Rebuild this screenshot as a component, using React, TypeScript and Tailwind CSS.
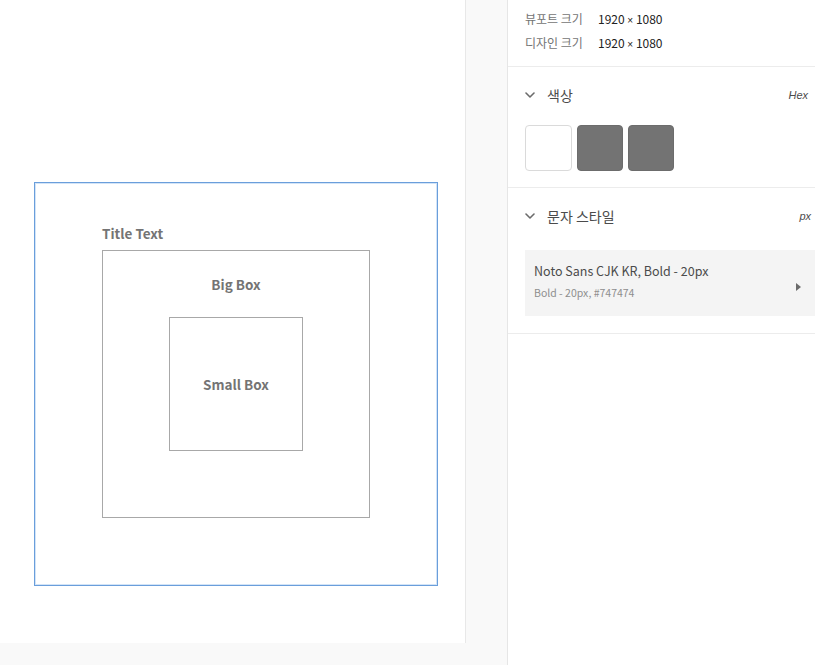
import React from "react";

const Chevron = () => (
  <svg width="10" height="6" viewBox="0 0 10 6" className="shrink-0">
    <path d="M1 1 L5 5 L9 1" fill="none" stroke="#6b6b6b" strokeWidth="1.6" strokeLinecap="round" strokeLinejoin="round" />
  </svg>
);

const Size = () => (
  <span className="text-[#222222]">
    1920 <span className="text-[10px] font-['Liberation_Sans',sans-serif]">×</span> 1080
  </span>
);

export default function App() {
  return (
    <div className="w-[815px] h-[665px] flex bg-[#f9f9f9] overflow-hidden font-['Noto_Sans_CJK_KR','Noto_Sans',sans-serif]">
      {/* Canvas */}
      <div className="w-[466px] h-[643px] shrink-0 bg-white border-r border-[#e8e8e8] pl-[34px] pt-[182px]">
        <div className="w-[404px] h-[404px] border border-[#6a9edb] shadow-[inset_0_0_0_1px_#d3e4f7] flex flex-col pl-[67px] pt-[40px]">
          <div className="h-[20px] leading-[20px] text-[13.5px] font-bold text-[#747474]">Title Text</div>
          <div className="mt-[7px] w-[268px] h-[268px] border border-[#a8a8a8] flex flex-col items-center pt-[23px]">
            <div className="h-[20px] leading-[20px] text-[13.5px] font-bold text-[#747474]">Big Box</div>
            <div className="mt-[23px] w-[134px] h-[134px] border border-[#a8a8a8] flex items-center justify-center">
              <div className="h-[20px] leading-[20px] text-[13.5px] font-bold text-[#747474]">Small Box</div>
            </div>
          </div>
        </div>
      </div>
      <div className="w-[41px] shrink-0" />
      {/* Right panel */}
      <div className="flex-1 h-full bg-white border-l border-[#e6e6e6] flex flex-col">
        <div className="pl-[17px] pt-[7px] pb-[11px] border-b border-[#ececec]">
          <div className="flex h-[24px] items-center text-[12px]">
            <span className="w-[73px] text-[#747474]">뷰포트 크기</span>
            <Size />
          </div>
          <div className="flex h-[24px] items-center text-[12px]">
            <span className="w-[73px] text-[#747474]">디자인 크기</span>
            <Size />
          </div>
        </div>
        <div className="pl-[17px] pt-[16px] pb-[16px] border-b border-[#ececec]">
          <div className="flex h-[24px] items-center pr-[7px]">
            <Chevron />
            <span className="ml-[12px] text-[14px] text-[#4b4b4b]">색상</span>
            <span className="ml-auto text-[11px] italic text-[#4b4b4b] font-['Liberation_Sans',sans-serif]">Hex</span>
          </div>
          <div className="mt-[18px] flex gap-[5px]">
            <div className="w-[47px] h-[46px] rounded-[4px] bg-white border border-[#dadada]" />
            <div className="w-[46px] h-[46px] rounded-[4px] bg-[#737373] border border-[#6c6c6c]" />
            <div className="w-[46px] h-[46px] rounded-[4px] bg-[#737373] border border-[#6c6c6c]" />
          </div>
        </div>
        <div className="pl-[17px] pt-[16px] pb-[17px] border-b border-[#ececec]">
          <div className="flex h-[24px] items-center pr-[4px]">
            <Chevron />
            <span className="ml-[12px] text-[14px] text-[#4b4b4b]">문자 스타일</span>
            <span className="ml-auto text-[11px] italic text-[#4b4b4b] font-['Liberation_Sans',sans-serif]">px</span>
          </div>
          <div className="mt-[22px] h-[66px] bg-[#f4f4f4] flex items-start pl-[9px] pr-[14px]">
            <div className="flex flex-col pt-[12px]">
              <span className="h-[18px] leading-[18px] text-[12.5px] text-[#4b4b4b]">Noto Sans CJK KR, Bold - 20px</span>
              <span className="mt-[5px] h-[16px] leading-[16px] text-[10.5px] text-[#8e8e8e]">Bold - 20px, #747474</span>
            </div>
            <svg width="5" height="8" viewBox="0 0 5 8" className="ml-auto mt-[33px]">
              <path d="M0 0 L5 4 L0 8 Z" fill="#6b6b6b" />
            </svg>
          </div>
        </div>
      </div>
    </div>
  );
}
